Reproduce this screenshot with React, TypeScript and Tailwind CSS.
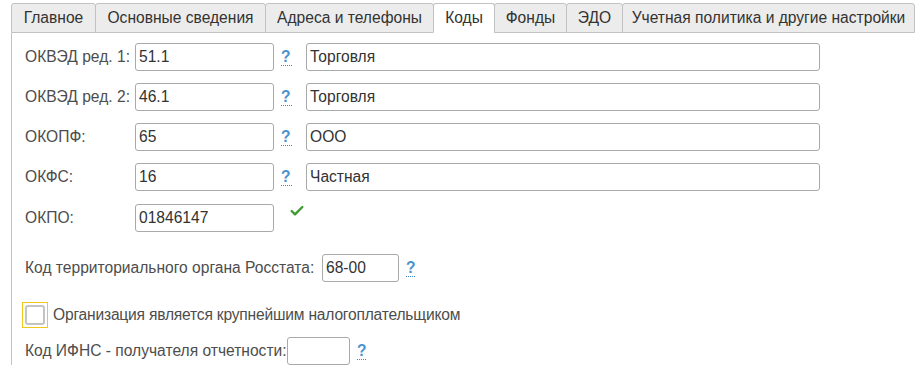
import { Check } from 'lucide-react'

const TABS = [
  { label: 'Главное', w: 'w-[85px]' },
  { label: 'Основные сведения', w: 'w-[171px]' },
  { label: 'Адреса и телефоны', w: 'w-[169px]' },
  { label: 'Коды', w: 'w-[62px]', active: true },
  { label: 'Фонды', w: 'w-[73px]' },
  { label: 'ЭДО', w: 'w-[57px]' },
  { label: 'Учетная политика и другие настройки', w: 'w-[293px]' },
]

const CODES = [
  { label: 'ОКВЭД ред. 1:', code: '51.1', name: 'Торговля' },
  { label: 'ОКВЭД ред. 2:', code: '46.1', name: 'Торговля' },
  { label: 'ОКОПФ:', code: '65', name: 'ООО' },
  { label: 'ОКФС:', code: '16', name: 'Частная' },
]

function Field({ value, className }: { value?: string; className: string }) {
  return (
    <div
      className={`flex h-[28px] items-center rounded-[3px] border border-[#a9a9a9] bg-white pl-[3px] text-[#333] ${className}`}
    >
      {value}
    </div>
  )
}

function Help({ className = '' }: { className?: string }) {
  return (
    <span
      className={`border-b border-dotted border-[#3d8acb] leading-[17px] font-bold text-[#4a93cf] ${className}`}
    >
      ?
    </span>
  )
}

export default function App() {
  return (
    <div
      className="h-[373px] w-[922px] overflow-hidden bg-white text-[15.6px] text-[#4d4d4d]"
      style={{ fontFamily: '"Liberation Sans", Arial, sans-serif' }}
    >
      {/* tabs */}
      <div className="flex pt-[3px] pl-[11px]">
        {TABS.map((t) => (
          <div
            key={t.label}
            className={`flex h-[30px] items-center justify-center rounded-t-[3px] border border-[#c2c2c2] -ml-px whitespace-nowrap first:ml-0 ${t.w} ${
              t.active ? 'border-b-white bg-white text-[#333]' : 'bg-[#ececec] text-[#333]'
            }`}
          >
            {t.label}
          </div>
        ))}
      </div>

      {/* panel */}
      <div className="ml-[11px] border-l border-[#c2c2c2] pt-[10px] pl-[13px]">
        <div className="flex flex-col gap-[12px]">
          {CODES.map((r) => (
            <div key={r.label} className="flex items-center">
              <span className="w-[110px] whitespace-nowrap">{r.label}</span>
              <Field value={r.code} className="w-[139px]" />
              <Help className="ml-[7px] w-[11px]" />
              <Field value={r.name} className="ml-[14px] w-[514px]" />
            </div>
          ))}
          <div className="flex items-center">
            <span className="w-[110px]">ОКПО:</span>
            <Field value="01846147" className="w-[139px]" />
            <Check size={16} strokeWidth={3.5} className="mb-[14px] ml-[15px] text-[#3c9a2e]" />
          </div>
        </div>

        <div className="mt-[21px] flex items-center">
          <span className="w-[297px] whitespace-nowrap">Код территориального органа Росстата:</span>
          <Field value="68-00" className="w-[77px]" />
          <Help className="ml-[7px] w-[9px]" />
        </div>

        <div className="mt-[20px] -ml-[3px] flex items-center">
          <div className="flex h-[26px] w-[26px] items-center justify-center border border-[#f2c81c]">
            <div className="h-[20px] w-[20px] rounded-[3px] border-2 border-[#c4c4c4] bg-white" />
          </div>
          <span className="ml-[5px] tracking-[-0.2px]">Организация является крупнейшим налогоплательщиком</span>
        </div>

        <div className="mt-[9px] flex items-center">
          <span className="w-[262px] whitespace-nowrap">Код ИФНС - получателя отчетности:</span>
          <Field className="w-[63px]" />
          <Help className="ml-[7px] w-[9px]" />
        </div>
      </div>
    </div>
  )
}
